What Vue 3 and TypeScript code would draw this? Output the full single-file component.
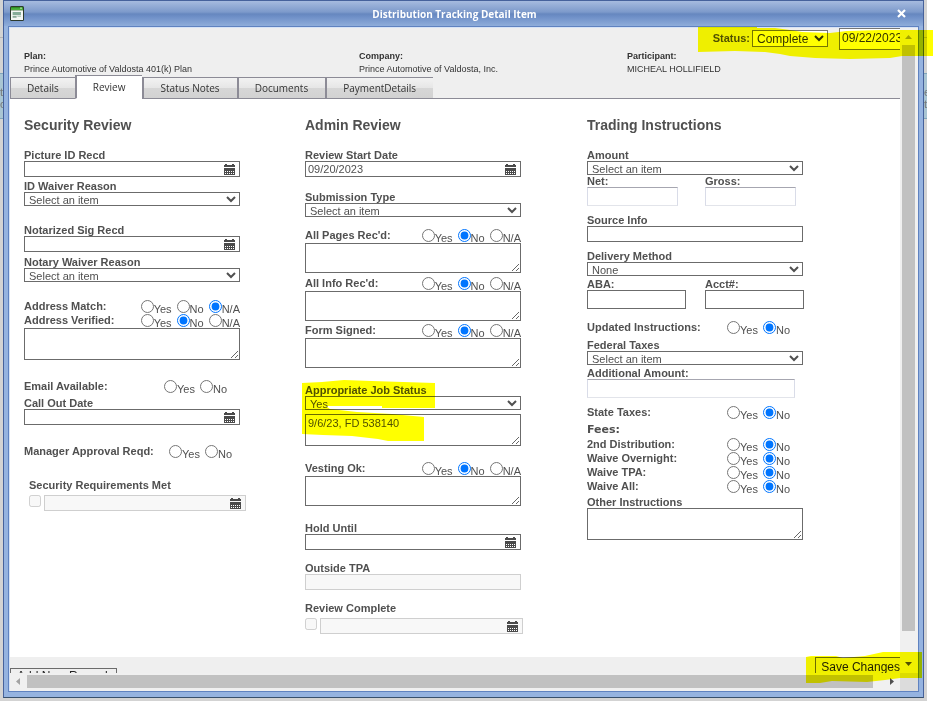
<script setup lang="ts">
import { ref } from 'vue'

type Kind = 'date' | 'select' | 'radios' | 'textarea' | 'text' | 'pair' | 'check' | 'caption'

interface Field {
  id: string
  kind: Kind
  gap: number
  label?: string
  value?: string
  options?: string[]
  picked?: string
  variant?: string
  disabled?: boolean
  parts?: { id: string; label: string }[]
}

interface Column {
  title: string
  fields: Field[]
}

const YNA = ['Yes', 'No', 'N/A']
const YN = ['Yes', 'No']

const columns = ref<Column[]>([
  {
    title: 'Security Review',
    fields: [
      { id: 'picture-id', kind: 'date', gap: 16, label: 'Picture ID Recd', value: '' },
      { id: 'id-waiver', kind: 'select', gap: 3, label: 'ID Waiver Reason', value: 'Select an item' },
      { id: 'notarized', kind: 'date', gap: 18, label: 'Notarized Sig Recd', value: '' },
      { id: 'notary-waiver', kind: 'select', gap: 4, label: 'Notary Waiver Reason', value: 'Select an item' },
      { id: 'address-match', kind: 'radios', gap: 18, label: 'Address Match:', options: YNA, picked: 'N/A' },
      { id: 'address-verified', kind: 'radios', gap: 0, label: 'Address Verified:', options: YNA, picked: 'No' },
      { id: 'address-notes', kind: 'textarea', gap: 0, value: '', variant: 'tall' },
      { id: 'email', kind: 'radios', gap: 20, label: 'Email Available:', options: YN, picked: '', variant: 'inset' },
      { id: 'call-out', kind: 'date', gap: 3, label: 'Call Out Date', value: '' },
      { id: 'manager', kind: 'radios', gap: 20, label: 'Manager Approval Reqd:', options: YN, picked: '', variant: 'near' },
      { id: 'security-met', kind: 'check', gap: 20, label: 'Security Requirements Met', variant: 'indented' },
    ],
  },
  {
    title: 'Admin Review',
    fields: [
      { id: 'review-start', kind: 'date', gap: 16, label: 'Review Start Date', value: '09/20/2023' },
      { id: 'submission', kind: 'select', gap: 14, label: 'Submission Type', value: 'Select an item' },
      { id: 'all-pages', kind: 'radios', gap: 12, label: "All Pages Rec'd:", options: YNA, picked: 'No' },
      { id: 'all-pages-notes', kind: 'textarea', gap: 0, value: '' },
      { id: 'all-info', kind: 'radios', gap: 4, label: "All Info Rec'd:", options: YNA, picked: 'No' },
      { id: 'all-info-notes', kind: 'textarea', gap: 0, value: '' },
      { id: 'form-signed', kind: 'radios', gap: 3, label: 'Form Signed:', options: YNA, picked: 'No' },
      { id: 'form-signed-notes', kind: 'textarea', gap: 0, value: '' },
      { id: 'job-status', kind: 'select', gap: 16, label: 'Appropriate Job Status', value: 'Yes' },
      { id: 'job-status-notes', kind: 'textarea', gap: 4, value: '9/6/23, FD 538140', variant: 'tall' },
      { id: 'vesting', kind: 'radios', gap: 16, label: 'Vesting Ok:', options: YNA, picked: 'No' },
      { id: 'vesting-notes', kind: 'textarea', gap: 0, value: '' },
      { id: 'hold-until', kind: 'date', gap: 16, label: 'Hold Until', value: '' },
      { id: 'outside-tpa', kind: 'text', gap: 12, label: 'Outside TPA', value: '', disabled: true },
      { id: 'review-complete', kind: 'check', gap: 12, label: 'Review Complete' },
    ],
  },
  {
    title: 'Trading Instructions',
    fields: [
      { id: 'amount', kind: 'select', gap: 16, label: 'Amount', value: 'Select an item' },
      { id: 'amounts', kind: 'pair', gap: 0, variant: 'soft', parts: [{ id: 'net', label: 'Net:' }, { id: 'gross', label: 'Gross:' }] },
      { id: 'source', kind: 'text', gap: 8, label: 'Source Info', value: '' },
      { id: 'delivery', kind: 'select', gap: 8, label: 'Delivery Method', value: 'None' },
      { id: 'bank', kind: 'pair', gap: 2, parts: [{ id: 'aba', label: 'ABA:' }, { id: 'acct', label: 'Acct#:' }] },
      { id: 'updated', kind: 'radios', gap: 12, label: 'Updated Instructions:', options: YN, picked: 'No', variant: 'inset' },
      { id: 'federal', kind: 'select', gap: 4, label: 'Federal Taxes', value: 'Select an item' },
      { id: 'additional', kind: 'text', gap: 2, label: 'Additional Amount:', value: '', variant: 'soft' },
      { id: 'state', kind: 'radios', gap: 8, label: 'State Taxes:', options: YN, picked: 'No', variant: 'inset' },
      { id: 'fees', kind: 'caption', gap: 4, label: 'Fees:' },
      { id: 'second', kind: 'radios', gap: 2, label: '2nd Distribution:', options: YN, picked: 'No', variant: 'inset' },
      { id: 'overnight', kind: 'radios', gap: 0, label: 'Waive Overnight:', options: YN, picked: 'No', variant: 'inset' },
      { id: 'tpa', kind: 'radios', gap: 0, label: 'Waive TPA:', options: YN, picked: 'No', variant: 'inset' },
      { id: 'waive-all', kind: 'radios', gap: 0, label: 'Waive All:', options: YN, picked: 'No', variant: 'inset' },
      { id: 'other', kind: 'textarea', gap: 2, label: 'Other Instructions', value: '', variant: 'tall' },
    ],
  },
])

const summary = [
  { term: 'Plan:', text: 'Prince Automotive of Valdosta 401(k) Plan' },
  { term: 'Company:', text: 'Prince Automotive of Valdosta, Inc.' },
  { term: 'Participant:', text: 'MICHEAL HOLLIFIELD' },
]

const tabs = ['Details', 'Review', 'Status Notes', 'Documents', 'PaymentDetails']
const activeTab = ref('Review')
const status = ref('Complete')
const statusDate = ref('09/22/2023')
</script>

<template>
  <div class="page">
    <div class="edge"><p class="behind">t<br />o</p></div>
    <section class="dialog" aria-labelledby="dialog-title">
      <header class="titlebar">
        <svg class="app-icon" viewBox="0 0 14 15" aria-hidden="true">
          <rect x="0" y="0" width="14" height="15" rx="1.5" fill="#2c3a2c" />
          <rect x="1" y="1" width="12" height="3.4" fill="#4cae3c" />
          <rect x="1" y="1" width="12" height="1.2" fill="#2d8c25" />
          <rect x="10" y="1.6" width="2" height="1" fill="#c8f0b8" />
          <rect x="1" y="4.4" width="12" height="9.6" fill="#f4f8f4" />
          <rect x="2.6" y="6" width="8.4" height="3.2" fill="#86ad98" />
          <rect x="2.6" y="10.2" width="4" height="1.4" fill="#6c967e" />
          <rect x="7.4" y="9.8" width="3.6" height="1" fill="#a9c4b4" />
        </svg>
        <h1 id="dialog-title">Distribution Tracking Detail Item</h1>
        <button class="close" type="button" aria-label="Close">
          <svg viewBox="0 0 9 9"><path d="M1 1 L8 8 M8 1 L1 8" stroke="#fff" stroke-width="2.2" /></svg>
        </button>
      </header>

      <div class="frame">
        <div class="viewport">
          <div class="head">
            <div class="status">
              <label for="status">Status:</label>
              <select id="status" v-model="status"><option>Complete</option></select>
              <input v-model="statusDate" class="status-date" type="text" aria-label="Status date" />
            </div>
            <dl class="summary">
              <div v-for="item in summary" :key="item.term">
                <dt>{{ item.term }}</dt>
                <dd>{{ item.text }}</dd>
              </div>
            </dl>
            <nav class="tabs" role="tablist">
              <button
                v-for="tab in tabs"
                :key="tab"
                type="button"
                role="tab"
                :class="{ active: tab === activeTab }"
                :aria-selected="tab === activeTab"
                @click="activeTab = tab"
              >{{ tab }}</button>
              <span class="tab-rest"></span>
            </nav>
          </div>

          <main class="columns">
            <section v-for="col in columns" :key="col.title">
              <h2>{{ col.title }}</h2>
              <div v-for="f in col.fields" :key="f.id" :class="['field', 'gap-' + f.gap, f.variant]">
                <fieldset v-if="f.kind === 'radios'" class="radio-row">
                  <legend class="name">{{ f.label }}</legend>
                  <label v-for="o in f.options" :key="o" class="radio">
                    <input v-model="f.picked" type="radio" :name="f.id" :value="o" /><span>{{ o }}</span>
                  </label>
                </fieldset>
                <p v-else-if="f.kind === 'caption'" class="caption">{{ f.label }}</p>
                <div v-else-if="f.kind === 'pair'" class="pair">
                  <div v-for="p in f.parts" :key="p.id">
                    <label class="name" :for="p.id">{{ p.label }}</label>
                    <input :id="p.id" class="box big" type="text" />
                  </div>
                </div>
                <template v-else>
                  <label v-if="f.label" class="name" :for="f.id">{{ f.label }}</label>
                  <select v-if="f.kind === 'select'" :id="f.id" v-model="f.value" class="pick">
                    <option>{{ f.value }}</option>
                  </select>
                  <textarea v-else-if="f.kind === 'textarea'" :id="f.id" v-model="f.value" class="area" :aria-label="f.label || f.id"></textarea>
                  <input v-else-if="f.kind === 'text'" :id="f.id" v-model="f.value" class="box" type="text" :disabled="f.disabled" />
                  <div v-else :class="{ 'check-row': f.kind === 'check' }">
                    <input v-if="f.kind === 'check'" :id="f.id" type="checkbox" disabled />
                    <div class="date" :class="{ off: f.kind === 'check' }">
                      <input
                        :id="f.kind === 'check' ? f.id + '-date' : f.id"
                        v-model="f.value"
                        type="text"
                        :aria-label="f.label"
                        :disabled="f.kind === 'check'"
                      />
                      <button type="button" aria-label="Open calendar">
                        <svg viewBox="0 0 11 11">
                          <path d="M1 0h2v1h5V0h2v1h1v2H0V1h1z M0 4h11v7H0z" fill="#4a4a4a" />
                          <path d="M1 7h1v1H1z M3 7h1v1H3z M5 7h1v1H5z M7 7h1v1H7z M9 7h1v1H9z M1 9h1v1H1z M3 9h1v1H3z M5 9h1v1H5z M7 9h1v1H7z M9 9h1v1H9z" fill="#fff" />
                        </svg>
                      </button>
                    </div>
                  </div>
                </template>
              </div>
            </section>
          </main>

          <footer class="foot">
            <button class="add" type="button">Add New Record</button>
            <button class="save" type="button">Save Changes</button>
          </footer>
        </div>

        <div class="vbar" aria-hidden="true">
          <svg viewBox="0 0 7 4"><path d="M0 4 L3.5 0 L7 4z" fill="#a3a3a3" /></svg>
          <span class="thumb"></span>
          <svg viewBox="0 0 7 4"><path d="M0 0h7L3.5 4z" fill="#505050" /></svg>
        </div>
        <div class="hbar" aria-hidden="true">
          <svg viewBox="0 0 4 7"><path d="M4 0v7L0 3.5z" fill="#a3a3a3" /></svg>
          <span class="thumb"></span>
          <svg viewBox="0 0 4 7"><path d="M0 0v7l4-3.5z" fill="#505050" /></svg>
        </div>
        <div class="corner"></div>
      </div>
    </section>
    <div class="edge"><p class="behind">e<br />t</p></div>

    <svg class="marker" width="933" height="701" viewBox="0 0 933 701" aria-hidden="true">
      <path d="M698 27H757V28L775 28L790 30L802 32L830 33L847 31L880 30H933V56H902L890 58L850 59L815 58L790 56L780 54L765 52L735 51L698 52z" />
      <path d="M302 383L322 382L344 380L372 381L403 382L435 383V408H382V406H326L330 409L357 412L392 414L424 417V441H388L378 439L352 436L323 435L302 434z" />
      <path d="M806 657L811 656H836L843 658L865 656L883 652H922V678L900 678L885 680L867 682L832 681L820 683H806z" />
    </svg>
  </div>
</template>

<style>
body {
  background: #fff;
}
</style>

<style scoped>
* {
  box-sizing: border-box;
}
.page {
  position: relative;
  display: flex;
  min-height: 100vh;
  padding-right: 6px;
  overflow: hidden;
  background: linear-gradient(#d3d3d3, #d3d3d3) no-repeat 0 0 / calc(100% - 6px) 100%;
  font: 11px/12px 'Liberation Sans', Arial, sans-serif;
  color: #505050;
}
.edge {
  flex: 0 0 3px;
  padding-top: 73px;
  overflow: hidden;
  background: linear-gradient(#b4b4b4, #b4b4b4) no-repeat 0 37px / 100% 1px;
}
.behind {
  height: 46px;
  margin: 0;
  padding-top: 12px;
  border: solid #7fa5bb;
  border-width: 1px 0;
  background: #a9c5d3;
  color: #777;
}
.dialog {
  flex: 1;
  min-width: 0;
  display: flex;
  flex-direction: column;
  margin-bottom: 3px;
  border: 1px solid #46629c;
  border-bottom-color: #38506c;
  background: #95b3e0;
}
.titlebar {
  display: flex;
  align-items: center;
  height: 25px;
  padding: 0 17px 0 6px;
  background: linear-gradient(#a6bbdf 0, #7d9acb 11px, #6687bf 13px, #6f90c8 16px, #8fadda 25px);
}
.app-icon {
  width: 14px;
  height: 15px;
}
h1 {
  flex: 1;
  margin: 0;
  padding-right: 12px;
  text-align: center;
  font: bold 10px/16px 'Open Sans', sans-serif;
  color: #fff;
}
.close {
  width: 9px;
  height: 9px;
  padding: 0;
  border: 0;
  background: none;
}
.close svg {
  display: block;
  width: 9px;
  height: 9px;
}
.frame {
  flex: 1;
  display: grid;
  grid-template: 1fr 18px / 1fr 18px;
  margin: 0 4px 5px;
  border: 1px solid #5f82c0;
  background: #f0f0f0;
  box-shadow: inset 1px 1px #d7e3f5;
  padding: 1px 0 0 1px;
}
.viewport {
  display: flex;
  flex-direction: column;
  min-width: 0;
  overflow: hidden;
  background: #fff;
}
.head {
  background: #efefef;
}
.status {
  display: flex;
  align-items: flex-start;
  justify-content: flex-end;
  height: 22px;
}
.status label {
  padding: 4px 2px 0 0;
  font-weight: bold;
}
.status select {
  width: 76px;
  height: 17px;
  margin: 2px 11px 0 0;
  padding: 0;
  border: 1px solid #767676;
  border-radius: 0;
  background: #fff;
  font: 12px/15px 'Liberation Sans', Arial, sans-serif;
  color: #333;
}
.status-date {
  width: 80px;
  height: 22px;
  margin-right: -19px;
  padding: 0 2px 2px;
  border: 1px solid #767676;
  background: #fff;
  font: 12px/16px 'Liberation Sans', Arial, sans-serif;
  color: #333;
}
.summary {
  display: grid;
  grid-template-columns: 335px 268px 1fr;
  margin: 0 0 -1px;
  padding: 0 14px;
  font-size: 9px;
  line-height: 13px;
  color: #333;
}
.summary dt {
  font-weight: bold;
}
.summary dd {
  margin: 0;
}
.tabs {
  display: flex;
  align-items: flex-end;
}
.tabs button {
  height: 22px;
  padding: 0 17px 0 16px;
  border: solid #8c8b96;
  border-width: 1px 0 1px 2px;
  background: linear-gradient(#f2f2f2, #e6e6e6 50%, #d6d6d6 52%, #d2d2d2);
  font: 10px/18px 'Open Sans', sans-serif;
  color: #333;
}
.tabs button:first-child {
  padding-right: 16px;
  border-left-width: 1px;
}
.tabs button.active {
  height: 24px;
  border-bottom-color: #fff;
  background: #fff;
}
.tab-rest {
  flex: 1;
  height: 1px;
  background: #8c8b96;
}
.columns {
  flex: 1;
  display: grid;
  grid-template-columns: 281fr 282fr 216fr;
  padding: 18px 97px 20px 14px;
}
.columns section {
  min-width: 0;
  padding-right: 65px;
}
.columns section:nth-child(2) {
  padding-right: 66px;
}
.columns section:last-child {
  padding-right: 0;
}
h2 {
  margin: 0;
  font-size: 14px;
  line-height: 16px;
}
.gap-2 { margin-top: 2px; }
.gap-3 { margin-top: 3px; }
.gap-4 { margin-top: 4px; }
.gap-8 { margin-top: 8px; }
.gap-12 { margin-top: 12px; }
.gap-14 { margin-top: 14px; }
.gap-16 { margin-top: 16px; }
.gap-18 { margin-top: 18px; }
.gap-20 { margin-top: 20px; }
.name {
  display: block;
  padding: 0;
  font-weight: bold;
  line-height: 12px;
}
.caption {
  margin: 0;
  font: bold 11px/12px 'DejaVu Sans', sans-serif;
}
.pick,
.area,
.box,
.date {
  display: block;
  width: 100%;
  height: 16px;
  margin: 0;
  padding: 0 3px;
  border: 1px solid #6b6b6b;
  border-radius: 0;
  background: #fff;
  font: 11px/14px 'Liberation Sans', Arial, sans-serif;
  color: #505050;
}
.pick {
  height: 14px;
  padding: 0;
  line-height: 12px;
}
.area {
  height: 30px;
  padding: 1px 2px;
}
.tall .area {
  height: 32px;
}
.big,
.soft .box {
  height: 19px;
}
.soft .box {
  width: calc(100% - 8px);
  border-color: #a6a6b0 #d9dce8 #e2e4ea;
}
.box:disabled,
.date.off {
  border-color: #cfcfcf;
  background: #f8f8f8;
}
.date {
  display: flex;
  align-items: center;
  padding: 0 4px 0 2px;
}
.date input {
  flex: 1;
  min-width: 0;
  height: 14px;
  padding: 0;
  border: 0;
  background: none;
  font: inherit;
  color: inherit;
}
.date button {
  width: 11px;
  height: 11px;
  padding: 0;
  border: 0;
  background: none;
}
.date svg {
  display: block;
  width: 11px;
  height: 11px;
}
.pair {
  display: grid;
  grid-template-columns: 1fr 1fr;
  column-gap: 19px;
  margin-right: -1px;
}
.radio-row {
  display: flex;
  justify-content: flex-end;
  gap: 5px;
  height: 14px;
  margin: 0;
  padding: 0;
  border: 0;
}
.radio-row .name {
  float: left;
  margin-right: auto;
}
.inset .radio-row {
  padding-right: 13px;
}
.near .radio-row {
  padding-right: 8px;
}
.radio {
  display: flex;
  line-height: 18px;
}
.radio input {
  width: 13px;
  height: 13px;
  margin: 0;
}
.check-row {
  display: flex;
  gap: 3px;
  margin: 4px -2px 0 0;
}
.check-row input[type='checkbox'] {
  flex: none;
  width: 12px;
  height: 12px;
  margin: 0;
}
.indented {
  margin-left: 5px;
  margin-right: -4px;
}
.foot {
  display: flex;
  justify-content: space-between;
  align-items: flex-start;
  height: 16px;
  background: #efefef;
}
.foot button {
  height: 20px;
  border: 1px solid #6b6b6b;
  background: #efefef;
  padding: 0 5px;
  font: 12px/16px 'Liberation Sans', Arial, sans-serif;
  color: #222;
}
.foot .add {
  height: 16px;
  margin-top: 11px;
  padding: 0 8px 0 6px;
  line-height: 14px;
}
.foot .save {
  margin-right: -6px;
}
.vbar,
.hbar {
  display: flex;
  align-items: center;
  background: #f0f0f0;
}
.vbar {
  flex-direction: column;
  padding: 7px 2px 7px 0;
}
.vbar svg {
  width: 7px;
  height: 4px;
}
.vbar .thumb {
  width: 13px;
  flex: 1;
  margin: 6px 0 31px;
  background: #c1c1c1;
}
.hbar {
  padding: 0 6px 2px;
}
.hbar svg {
  width: 4px;
  height: 7px;
}
.hbar .thumb {
  flex: 1;
  height: 13px;
  margin: 0 17px 0 7px;
  background: #c1c1c1;
}
.corner {
  background: #dcdcdc;
}
.marker {
  position: absolute;
  top: 0;
  left: 0;
  mix-blend-mode: multiply;
  pointer-events: none;
  fill: #ff0;
}
</style>
